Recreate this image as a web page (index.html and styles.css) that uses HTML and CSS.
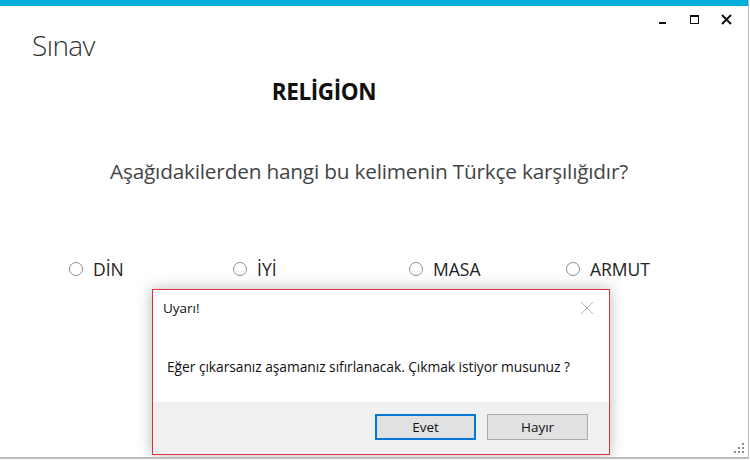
FILE: index.html
```html
<!DOCTYPE html>
<html lang="tr">
<head>
<meta charset="utf-8">
<link rel="stylesheet" href="styles.css">
</head>
<body>
<div class="window">
  <div class="accent"></div>
  <div class="controls">
    <span class="ctl min"></span>
    <span class="ctl max"></span>
    <span class="ctl close">
      <svg width="11" height="11" viewBox="0 0 11 11"><path d="M1 1L10 10M10 1L1 10" stroke="#111" stroke-width="2"/></svg>
    </span>
  </div>
  <div class="app-title">Sınav</div>
  <div class="word">RELİGİON</div>
  <div class="question">Aşağıdakilerden hangi bu kelimenin Türkçe karşılığıdır?</div>
  <div class="options">
    <label class="opt"><span class="radio"></span>DİN</label>
    <label class="opt"><span class="radio"></span>İYİ</label>
    <label class="opt"><span class="radio"></span>MASA</label>
    <label class="opt"><span class="radio"></span>ARMUT</label>
  </div>
  <div class="grip">
    <svg width="12" height="12" viewBox="0 0 12 12" fill="#8a8a8a">
      <rect x="9" y="1" width="2" height="2"/>
      <rect x="5" y="5" width="2" height="2"/><rect x="9" y="5" width="2" height="2"/>
      <rect x="1" y="9" width="2" height="2"/><rect x="5" y="9" width="2" height="2"/><rect x="9" y="9" width="2" height="2"/>
    </svg>
  </div>

  <div class="dialog">
    <div class="dlg-head">
      <span class="dlg-title">Uyarı!</span>
      <svg class="dlg-x" width="14" height="14" viewBox="0 0 14 14"><path d="M1 1L13 13M13 1L1 13" stroke="#b4b4b4" stroke-width="1"/></svg>
    </div>
    <div class="dlg-msg">Eğer çıkarsanız aşamanız sıfırlanacak. Çıkmak istiyor musunuz ?</div>
    <div class="dlg-foot">
      <button class="btn primary">Evet</button>
      <button class="btn">Hayır</button>
    </div>
  </div>
</div>
</body>
</html>
```

FILE: styles.css
```css
html, body {
  margin: 0;
  padding: 0;
  background: #ffffff;
  font-family: "Open Sans", "Noto Sans", sans-serif;
}

.window {
  position: relative;
  width: 748px;
  height: 457px;
  background: #ffffff;
  border-right: 1px solid #bcbcbc;
  border-bottom: 2px solid #bcbcbc;
  overflow: hidden;
}

.accent {
  height: 6px;
  background: #00aedb;
}

.controls {
  display: flex;
  justify-content: flex-end;
  align-items: center;
  height: 26px;
  padding-right: 6px;
}

.ctl {
  width: 32px;
  display: flex;
  justify-content: center;
  align-items: center;
  height: 26px;
}

.ctl.min::before {
  content: "";
  display: block;
  width: 7px;
  height: 2px;
  background: #111;
  margin-top: 7px;
}

.ctl.max::before {
  content: "";
  display: block;
  width: 7px;
  height: 6px;
  border: 1.5px solid #111;
  border-top-width: 2.5px;
}

.app-title {
  padding-left: 32px;
  margin-top: -3px;
  font-size: 28px;
  font-weight: 300;
  color: #333;
  letter-spacing: -0.6px;
  line-height: 32px;
}

.word {
  text-align: center;
  margin-top: 17px;
  padding-right: 100px;
  font-size: 22.5px;
  font-weight: 700;
  color: #111;
  line-height: 28px;
  letter-spacing: -0.4px;
}

.question {
  margin-top: 51px;
  padding-left: 110px;
  font-size: 20.8px;
  color: #444;
  line-height: 28px;
  letter-spacing: -0.2px;
}

.options {
  display: grid;
  grid-template-columns: 164px 176px 157px 1fr;
  padding-left: 69px;
  margin-top: 72px;
}

.opt {
  display: flex;
  align-items: center;
  font-size: 17.5px;
  color: #222;
  line-height: 24px;
}

.radio {
  width: 14px;
  height: 14px;
  border: 1px solid #8f8f8f;
  border-radius: 50%;
  margin-right: 10px;
  box-sizing: border-box;
}

.grip {
  position: absolute;
  right: 3px;
  bottom: 3px;
  width: 12px;
  height: 12px;
}

.grip svg { display: block; }

.dialog {
  position: absolute;
  left: 152px;
  top: 289px;
  width: 456px;
  height: 164px;
  background: #ffffff;
  border: 1px solid #e0303c;
  box-shadow: 0 0 14px rgba(0,0,0,0.28);
  display: flex;
  flex-direction: column;
}

.dlg-head {
  display: flex;
  justify-content: space-between;
  align-items: center;
  height: 36px;
  padding: 0 15px 0 10px;
}

.dlg-title {
  font-size: 13.5px;
  color: #111;
}

.dlg-msg {
  padding: 31px 0 0 14px;
  font-size: 13.8px;
  color: #111;
  height: 76px;
  box-sizing: border-box;
  letter-spacing: -0.05px;
}

.dlg-foot {
  flex: 1;
  background: #f0f0f0;
  display: flex;
  justify-content: flex-end;
  align-items: flex-start;
  gap: 11px;
  padding: 12px 21px 0 0;
}

.btn {
  width: 101px;
  height: 26px;
  background: #e1e1e1;
  border: 1px solid #adadad;
  font-family: "Open Sans", "Noto Sans", sans-serif;
  font-size: 13.5px;
  color: #111;
  padding: 0;
}

.btn.primary {
  border: 2px solid #0078d7;
}
```
